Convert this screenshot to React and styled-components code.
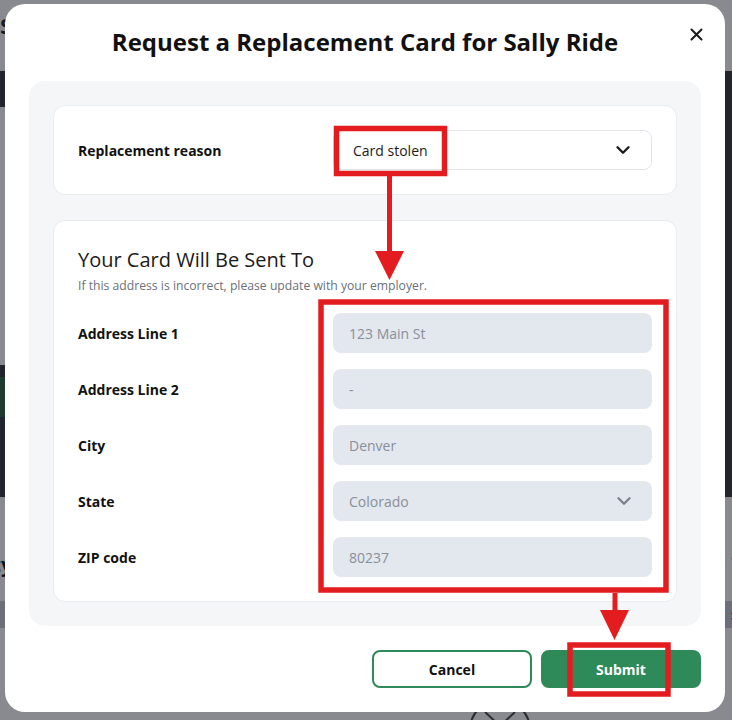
import React from "react"
import styled, { createGlobalStyle } from "styled-components"

const GlobalStyle = createGlobalStyle`
  html, body {
    margin: 0;
    padding: 0;
  }
  body {
    width: 732px;
    height: 720px;
    overflow: hidden;
    font-family: "Open Sans", "Noto Sans", sans-serif;
    background: #ffffff;
  }
  * {
    box-sizing: border-box;
  }
`

const addressFields = [
  { label: "Address Line 1", value: "123 Main St" },
  { label: "Address Line 2", value: "-" },
  { label: "City", value: "Denver" },
  { label: "State", value: "Colorado", select: true },
  { label: "ZIP code", value: "80237" },
]

const Chevron = ({ color }) => (
  <svg width="22" height="22" viewBox="0 0 24 24" fill="none" stroke={color} strokeWidth="2.6" strokeLinecap="round" strokeLinejoin="round">
    <path d="M6 9l6 6 6-6" />
  </svg>
)

const App = () => {
  return (
    <>
      <GlobalStyle />
      <BackPage>
        <TopBar>Spending</TopBar>
        <Hero>
          <HeroSide>
            <HeroCard />
            <HeroButton />
          </HeroSide>
        </Hero>
        <Lower>
          <LowerRow>
            <LowerTitle>Activity</LowerTitle>
            <LowerLink>View list</LowerLink>
          </LowerRow>
          <TableHead>
            <span />
            <strong>Status</strong>
          </TableHead>
          <Doodle width="90" height="60" viewBox="0 0 90 60" fill="none" stroke="#44464d" strokeWidth="2">
            <circle cx="45" cy="40" r="30" />
            <path d="M30 22l15 14 15-14M45 36v20" />
          </Doodle>
        </Lower>
      </BackPage>

      <Overlay>
        <Modal>
          <CloseButton aria-label="Close">
            <svg width="13" height="13" viewBox="0 0 13 13" stroke="#1a1a1a" strokeWidth="2" strokeLinecap="round">
              <path d="M1.5 1.5l10 10M11.5 1.5l-10 10" />
            </svg>
          </CloseButton>
          <Title>Request a Replacement Card for Sally Ride</Title>

          <Panel>
            <Card>
              <FieldRow>
                <Label>Replacement reason</Label>
                <ReasonSelect>
                  <span>Card stolen</span>
                  <Chevron color="#1a1a1a" />
                </ReasonSelect>
              </FieldRow>
            </Card>

            <Card>
              <Heading>Your Card Will Be Sent To</Heading>
              <Hint>If this address is incorrect, please update with your employer.</Hint>
              <Fields>
                {addressFields.map(f => (
                  <FieldRow key={f.label}>
                    <Label>{f.label}</Label>
                    <ReadOnlyInput>
                      <span>{f.value}</span>
                      {f.select && <Chevron color="#7d828c" />}
                    </ReadOnlyInput>
                  </FieldRow>
                ))}
              </Fields>
            </Card>
          </Panel>

          <Actions>
            <Button>Cancel</Button>
            <Button primary>Submit</Button>
          </Actions>
        </Modal>
      </Overlay>

      <Annotations viewBox="0 0 732 720">
        <g fill="none" stroke="#e31c1f" strokeWidth="5.5">
          <rect x="336.5" y="128.5" width="108" height="45" />
          <rect x="321" y="302" width="345" height="288" />
          <rect x="570" y="645" width="98" height="49" />
        </g>
        <g stroke="#e31c1f" strokeWidth="5">
          <line x1="389.5" y1="176" x2="389.5" y2="253" />
          <line x1="615" y1="593" x2="615" y2="612" />
        </g>
        <g fill="#e31c1f">
          <polygon points="375,251 404,251 389.5,280" />
          <polygon points="600,610 629,610 614.5,640" />
        </g>
      </Annotations>
    </>
  )
}

export default App

const BackPage = styled.div`
  width: 732px;
  height: 720px;
  display: flex;
  flex-direction: column;
  background: #ffffff;
`

const TopBar = styled.div`
  height: 71px;
  padding: 10px 0 0 0;
  font-size: 22px;
  font-weight: 700;
  color: #1f2329;
  background: #ffffff;
`

const Hero = styled.div`
  height: 426px;
  background: #333539;
  padding-top: 36px;
`

const HeroSide = styled.div`
  width: 300px;
  display: flex;
  flex-direction: column;
  gap: 12px;
`

const HeroCard = styled.div`
  height: 258px;
  background: #ffffff;
`

const HeroButton = styled.div`
  height: 40px;
  background: #2b5f3d;
`

const Lower = styled.div`
  flex: 1;
  position: relative;
  display: flex;
  flex-direction: column;
  padding-top: 54px;
`

const LowerRow = styled.div`
  display: flex;
  justify-content: space-between;
  align-items: flex-start;
  height: 50px;
  line-height: 27px;
`

const LowerTitle = styled.span`
  font-size: 20px;
  font-weight: 700;
  color: #111;
  margin-left: -64px;
`

const LowerLink = styled.span`
  font-size: 16px;
  color: #555;
  margin-right: -60px;
`

const TableHead = styled.div`
  height: 27px;
  background: #c9cbd3;
  display: flex;
  justify-content: space-between;
  align-items: center;
  font-size: 13px;
  color: #111;
  strong {
    margin-right: -40px;
  }
`

const Doodle = styled.svg`
  position: absolute;
  left: 455px;
  bottom: -30px;
`

const Overlay = styled.div`
  position: fixed;
  inset: 0;
  background: rgba(19, 21, 31, 0.5);
  display: flex;
  justify-content: flex-start;
  align-items: flex-start;
  padding: 4px 0 0 5px;
`

const Modal = styled.div`
  position: relative;
  width: 720px;
  background: #ffffff;
  border-radius: 20px;
  padding: 22px 24px 24px;
  display: flex;
  flex-direction: column;
`

const CloseButton = styled.button`
  position: absolute;
  top: 22px;
  right: 20px;
  width: 17px;
  height: 17px;
  padding: 0;
  border: none;
  background: transparent;
  display: flex;
  align-items: center;
  justify-content: center;
`

const Title = styled.h2`
  margin: 0 0 23px;
  text-align: center;
  font-size: 24px;
  line-height: 32px;
  font-weight: 700;
  color: #111;
`

const Panel = styled.div`
  background: #f5f6f8;
  border-radius: 16px;
  padding: 24px;
  display: flex;
  flex-direction: column;
  gap: 25px;
`

const Card = styled.div`
  background: #ffffff;
  border: 1px solid #e8ebef;
  border-radius: 12px;
  padding: 24px;
`

const FieldRow = styled.div`
  display: grid;
  grid-template-columns: 255px 1fr;
  align-items: center;
`

const Label = styled.span`
  font-size: 14px;
  font-weight: 700;
  color: #111;
`

const ReasonSelect = styled.div`
  height: 40px;
  border: 1px solid #e2e6ec;
  border-radius: 8px;
  padding: 0 17px 0 19px;
  display: flex;
  align-items: center;
  justify-content: space-between;
  font-size: 14px;
  color: #1a1a1a;
`

const Heading = styled.h3`
  margin: 1px 0 0;
  font-size: 20px;
  line-height: 28px;
  font-weight: 400;
  color: #1a1a1a;
`

const Hint = styled.p`
  margin: 4px 0 0;
  font-size: 12.2px;
  line-height: 16px;
  color: #6b7079;
`

const Fields = styled.div`
  margin-top: 19px;
  display: flex;
  flex-direction: column;
  gap: 16px;
`

const ReadOnlyInput = styled.div`
  height: 40px;
  background: #e3e7ee;
  border-radius: 8px;
  padding: 0 17px 0 16px;
  display: flex;
  align-items: center;
  justify-content: space-between;
  font-size: 14px;
  color: #8a8f99;
`

const Actions = styled.div`
  margin-top: 24px;
  display: flex;
  justify-content: flex-end;
  gap: 9px;
`

const Button = styled.button`
  width: 160px;
  height: 38px;
  border-radius: 8px;
  font-family: "Open Sans", "Noto Sans", sans-serif;
  font-size: 14px;
  font-weight: 700;
  border: 2px solid #2e8a58;
  background: ${p => (p.primary ? "#2e8a58" : "#ffffff")};
  color: ${p => (p.primary ? "#ffffff" : "#111")};
`

const Annotations = styled.svg`
  position: fixed;
  left: 0;
  top: 0;
  width: 732px;
  height: 720px;
  pointer-events: none;
`
